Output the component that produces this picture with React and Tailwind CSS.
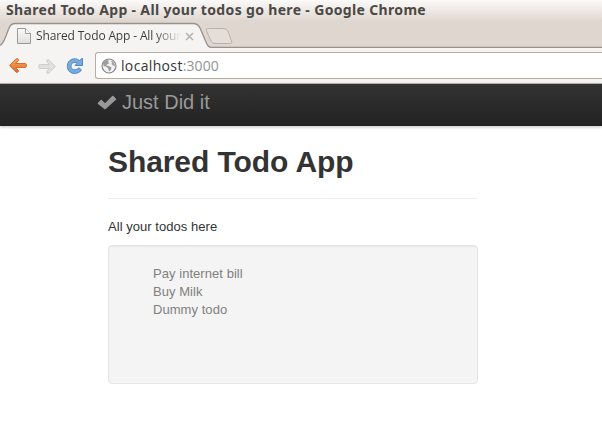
const todos = ["Pay internet bill", "Buy Milk", "Dummy todo"];

function TabShapes() {
  return (
    <svg className="absolute left-0 top-0 h-[28px] w-full" width="602" height="28" viewBox="0 0 602 28" fill="none">
      <path d="M0 25.5C3 24 4 21 6 16L9 8C10.500 4.500 12 3.500 15 3.500H193C197 3.500 198.500 5 200 8L206 22C207.500 25.500 208.500 27.500 212 27.500H602V28H0Z" fill="#f5f4f3" />
      <path d="M0 25.500C3 24 4 21 6 16L9 8C10.500 4.500 12 3.500 15 3.500H193C197 3.500 198.500 5 200 8L206 22C207.500 25.500 208.500 27.500 212 27.500H602" stroke="#999089" strokeWidth="1.300" />
      <path d="M208.500 8.500H223C226 8.500 227.500 10 228.500 12.500L231.500 21C232.300 23 231.500 23.500 229.500 23.500H216C213 23.500 211.500 22.500 210.500 20L206.500 11C205.800 9.300 206.500 8.500 208.500 8.500Z" fill="#e4ddd8" stroke="#b9b0a9" />
    </svg>
  );
}

function PageIcon() {
  return (
    <svg className="shrink-0" width="16" height="18" viewBox="0 0 16 18">
      <defs>
        <linearGradient id="paper" x1="0" y1="0" x2="0" y2="1">
          <stop stopColor="#fafafa" />
          <stop offset="1" stopColor="#dedede" />
        </linearGradient>
      </defs>
      <path d="M1.500 1.500H9.500L14.500 6.500V16.500H1.500Z" fill="url(#paper)" stroke="#999" />
      <path d="M9.500 1.500V6.500H14.500" fill="#fff" stroke="#999" />
    </svg>
  );
}

function Arrow({ forward }) {
  return (
    <svg className={forward ? "shrink-0 rotate-180" : "shrink-0"} width="20" height="18" viewBox="0 0 20 18">
      <defs>
        <linearGradient id="orange" x1="0" y1="0" x2="0" y2="1">
          <stop stopColor="#f3aa62" />
          <stop offset="1" stopColor="#df6b27" />
        </linearGradient>
      </defs>
      <path
        d="M1.500 8.500L8 2Q9 1.200 10 2Q11 3 10 4L7.500 6.500H17Q18.500 6.500 18.500 8.500Q18.500 10.500 17 10.500H7.500L10 13Q11 14 10 15Q9 15.800 8 15Z"
        fill={forward ? "#e2dfdd" : "url(#orange)"}
        stroke={forward ? "#d2cecb" : "#dc6b2b"}
        strokeLinejoin="round"
      />
    </svg>
  );
}

function Reload() {
  return (
    <svg className="shrink-0" width="18" height="18" viewBox="0 0 18 18">
      <path
        d="M16.500 1.500V8.500H9L11.300 6.100C7.800 4.300 5 6.200 5 9.300C5 12.800 9.500 14 12.200 11.300Q13 10.600 13.800 11.300L15 12.500Q15.500 13.200 14.900 13.800C9.900 18.800 1.300 16.500 1.300 9.300C1.300 2.500 8.500 -0.500 13.700 3.700L15.200 1.900Q15.900 1.100 16.500 1.500Z"
        fill="#76abe0"
        stroke="#5188c4"
        strokeLinejoin="round"
      />
    </svg>
  );
}

function Globe() {
  return (
    <svg className="shrink-0" width="16" height="16" viewBox="0 0 16 16">
      <circle cx="8" cy="8" r="7" fill="#f3f3f3" stroke="#858585" strokeWidth="1.200" />
      <path d="M2 5L5 2L8 2.500L7 4L8.500 5L6 6.500L5 7.500L8 8L10.500 9.500L10 11.500L8.500 13.500L7.500 12L7 10L4.500 8.500L2.500 8Z" fill="#9d9d9d" />
      <path d="M9.500 2.500L12 3.500L14 6.500L13.500 8.500L12 7.500L10.500 6L11 4.500Z" fill="#a5a5a5" />
    </svg>
  );
}

function BrowserChrome() {
  return (
    <header className="font-['Open_Sans','Noto_Sans',sans-serif]">
      <div className="h-[20px] bg-linear-to-b from-[#fbfaf9] to-[#e1d9d3] pl-[6px]">
        <div className="w-[440px] whitespace-nowrap font-['Noto_Sans',sans-serif] text-[14px] font-bold leading-[20px] tracking-[0.34px] text-[#4b4945]">
          Shared Todo App - All your todos go here - Google Chrome
        </div>
      </div>
      <div className="relative h-[28px] bg-[#dfd6d0]">
        <TabShapes />
        <div className="relative flex h-[28px] w-[204px] items-center pl-[16px] pt-[4px]">
          <PageIcon />
          <div className="ml-[4px] w-[145px] overflow-hidden whitespace-nowrap bg-linear-to-r from-[#3c3a38] from-82% to-transparent bg-clip-text text-[12px] leading-[18px] tracking-[-0.15px] text-transparent">
            Shared Todo App - All your
          </div>
          <svg className="ml-[4px]" width="9" height="9" viewBox="0 0 9 9">
            <path d="M1 1L8 8M8 1L1 8" stroke="#b4b0ac" strokeWidth="1.500" />
          </svg>
        </div>
      </div>
      <div className="flex h-[36px] items-start border-b border-[#b9b5b1] bg-[#f5f4f3] pl-[8px] pt-[4px]">
        <div className="flex h-[27px] w-[87px] items-center gap-[9px]">
          <Arrow />
          <Arrow forward />
          <Reload />
        </div>
        <div className="flex h-[27px] flex-1 items-center rounded-l-[3px] border border-r-0 border-[#b6ada1] bg-white pl-[5px]">
          <Globe />
          <span className="ml-[4px] text-[14px] leading-[20px] tracking-[0.34px] text-[#353433]">localhost</span>
          <span className="text-[14px] leading-[20px] tracking-[0.1px] text-[#929292]">:3000</span>
        </div>
      </div>
    </header>
  );
}

export default function App() {
  return (
    <div className="h-[445px] w-[602px] overflow-hidden bg-white">
      <BrowserChrome />
      <div className="font-['Liberation_Sans',Arial,sans-serif]">
        <nav className="flex h-[42px] items-start bg-linear-to-b from-[#333] to-[#222] pl-[97px] shadow-[0_1px_3px_rgba(0,0,0,0.25)]">
          <svg className="mt-[11px] shrink-0" width="20" height="15" viewBox="0 0 20 15">
            <path d="M1 7.700L3.600 5.100Q4.200 4.500 4.800 5.100L8 8.300L15.200 1.100Q15.800 0.500 16.400 1.100L18.900 3.600Q19.500 4.200 18.900 4.800L8.700 14Q8 14.600 7.300 14L1 8.900Q0.400 8.300 1 7.700Z" fill="#999" />
          </svg>
          <span className="ml-[5px] mt-[8px] text-[20px] leading-[20px] text-[#999]">Just Did it</span>
        </nav>
        <main className="ml-[108px] w-[370px] text-[13px] leading-[18px] text-[#333]">
          <h1 className="pt-[18px] text-[30px] font-bold leading-[36px] tracking-[-0.08px]">Shared Todo App</h1>
          <hr className="mt-[18px] border-[#eee]" />
          <p className="mt-[19px] tracking-[0.04px]">All your todos here</p>
          <section className="mt-[9px] h-[139px] rounded-[4px] border border-[#e5e5e5] bg-[#f4f4f4] pl-[44px] pt-[19px] tracking-[0.05px] text-[#808080] shadow-[inset_0_1px_1px_rgba(0,0,0,0.05)]">
            <ul>
              {todos.map((todo) => (
                <li key={todo}>{todo}</li>
              ))}
            </ul>
          </section>
        </main>
      </div>
    </div>
  );
}
